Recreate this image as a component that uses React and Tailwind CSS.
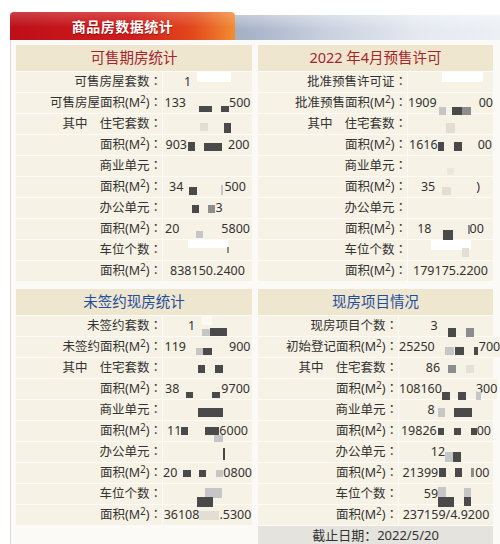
import React from 'react';

const D = '#4a4a4a';
const M = '#8d8d8d';
const L = '#c6c6c6';
const W = '#ffffff';
const F = '#e2ded3';

// a blurred stretch of a number: width + grey squares [x, y, w, h, colour]
const B = (w, blocks) => ({ w, blocks });

const PANELS = [
  {
    title: '可售期房统计',
    color: '#a2252b',
    cols: 'grid-cols-[146px_1fr]',
    labels: ['可售房屋套数', '可售房屋面积(M2)', '其中|住宅套数', '面积(M2)', '商业单元', '面积(M2)', '办公单元', '面积(M2)', '车位个数', '面积(M2)'],
    values: [
      ['1', B(40, [[6, 0, 34, 10, W]])],
      ['133', B(43, [[13, 13, 13, 6, D], [35, 13, 8, 6, D]]), '500'],
      [B(60, [[22, 9, 8, 8, F], [46, 9, 7, 10, D]])],
      ['903', B(41, [[1, 7, 7, 9, D], [17, 8, 18, 8, D]]), '200'],
      [],
      ['34', B(41, [[6, 10, 8, 8, D], [38, 8, 2, 10, L]]), '500'],
      [B(23, [[0, 7, 7, 8, D], [16, 7, 7, 8, M]]), '3'],
      ['20', B(42, [[17, 12, 7, 7, L]]), '5800'],
      [B(40, [[0, 0, 40, 8, W], [39, 7, 2, 6, M]])],
      ['838150.2400'],
    ],
  },
  {
    title: '2022 年4月预售许可',
    color: '#a2252b',
    cols: 'grid-cols-[149px_1fr]',
    labels: ['批准预售许可证', '批准预售面积(M2)', '其中|住宅套数', '面积(M2)', '商业单元', '面积(M2)', '办公单元', '面积(M2)', '车位个数', '面积(M2)'],
    values: [
      [B(41, [[12, 0, 41, 10, W]])],
      ['1909', B(42, [[2, 14, 7, 8, L], [15, 14, 10, 8, D], [25, 14, 9, 8, M]]), '00'],
      [B(20, [[5, 9, 9, 10, F]])],
      ['1616', B(40, [[0, 7, 6, 9, D], [16, 7, 8, 9, D]]), '00'],
      [B(20, [[6, 12, 7, 7, '#ebe7dc']])],
      ['35', B(41, [[7, 10, 9, 8, F]]), ')'],
      [],
      ['18', B(38, [[11, 11, 10, 10, D], [36, 6, 2, 9, M]]), '00'],
      [B(40, [[0, 0, 40, 10, W], [31, 8, 7, 9, F]])],
      ['179175.2200'],
    ],
  },
  {
    title: '未签约现房统计',
    color: '#1f4e9b',
    cols: 'grid-cols-[146px_1fr]',
    labels: ['未签约套数', '未签约面积(M2)', '其中|住宅套数', '面积(M2)', '商业单元', '面积(M2)', '办公单元', '面积(M2)', '车位个数', '面积(M2)'],
    values: [
      ['1', B(32, [[7, 0, 10, 9, '#fbfaf5'], [7, 13, 8, 7, L], [15, 12, 17, 8, D]])],
      ['119', B(43, [[10, 11, 7, 7, L], [17, 11, 9, 7, D]]), '900'],
      [B(40, [[10, 7, 7, 8, D], [27, 7, 8, 8, D]])],
      ['38', B(42, [[7, 13, 7, 6, D], [33, 13, 8, 6, D]]), '9700'],
      [B(40, [[10, 8, 25, 9, D]])],
      ['11', B(38, [[0, 6, 7, 8, D], [24, 6, 14, 8, D], [33, 14, 9, 7, L]]), '6000'],
      [B(34, [[32, 6, 2, 12, D]])],
      ['20', B(46, [[6, 7, 8, 7, D], [22, 7, 7, 7, D], [39, 7, 7, 7, L]]), '0800'],
      [B(30, [[12, 4, 17, 10, L], [4, 13, 16, 10, D]])],
      ['36108', B(20, [[0, 6, 20, 9, F]]), '.5300'],
    ],
  },
  {
    title: '现房项目情况',
    color: '#1f4e9b',
    cols: 'grid-cols-[140px_1fr]',
    labels: ['现房项目个数', '初始登记面积(M2)', '其中|住宅套数', '面积(M2)', '商业单元', '面积(M2)', '办公单元', '面积(M2)', '车位个数', '面积(M2)'],
    values: [
      ['3', B(24, [[10, 12, 8, 9, D], [28, 12, 8, 9, M]])],
      ['25250', B(44, [[10, 10, 9, 8, L], [20, 10, 9, 8, D], [39, 10, 4, 8, D]]), '700'],
      ['86', B(26, [[8, 7, 8, 8, M], [26, 7, 8, 8, '#e4e1d8']])],
      ['108160', B(34, [[0, 13, 8, 8, D], [16, 13, 8, 8, D], [34, 13, 5, 8, L]]), '300'],
      ['8', B(30, [[3, 8, 7, 9, L], [19, 8, 18, 9, D]])],
      ['19826', B(40, [[1, 7, 6, 7, D], [17, 7, 7, 7, D], [34, 7, 6, 7, D]]), '00'],
      ['12', B(16, [[0, 10, 8, 10, L], [8, 10, 8, 10, D]])],
      ['21399', B(37, [[1, 5, 7, 9, D], [17, 5, 7, 9, D], [33, 5, 3, 9, M]]), '00'],
      ['59', B(30, [[0, 3, 8, 10, L], [0, 13, 16, 10, D], [26, 4, 7, 9, L], [26, 13, 7, 9, D]])],
      ['237159/4.9200'],
    ],
    footer: '截止日期：2022/5/20',
  },
];

// full-width colon, centred the way the source font draws it
const Colon = () => <span className="font-['Noto_Sans_CJK_JP',sans-serif]">：</span>;

function Label({ text }) {
  if (text.includes('|')) {
    const [a, b] = text.split('|');
    return (
      <>
        <span>{a}</span>
        <span className="ml-3">{b}<Colon /></span>
      </>
    );
  }
  if (text.includes('(M2)')) {
    return (
      <span>
        {text.replace('(M2)', '')}(M<sup className="text-[10px] -top-[0.45em]">2</sup>)<Colon />
      </span>
    );
  }
  return <span>{text}<Colon /></span>;
}

function Blur({ w, blocks }) {
  return (
    <span className="relative self-stretch shrink-0" style={{ width: w }}>
      {blocks.map(([x, y, bw, bh, c], i) => (
        <span key={i} className="absolute" style={{ left: x, top: y, width: bw, height: bh, background: c }} />
      ))}
    </span>
  );
}

function Panel({ title, color, cols, labels, values, footer }) {
  return (
    <div className="flex flex-col gap-px bg-[#fcfbf7]">
      <div className="h-[26px] flex items-center justify-center bg-[#efe6d0] text-[14.5px]" style={{ color }}>
        {title}
      </div>
      {labels.map((l, i) => (
        <div key={i} className={`grid gap-px ${cols}`}>
          <div className="h-[20px] flex items-center justify-end bg-[#f6f2e5]">
            <Label text={l} />
          </div>
          <div className="h-[20px] flex items-center justify-center bg-[#f6f2e5]">
            {values[i].map((v, j) => (typeof v === 'string' ? <span key={j}>{v}</span> : <Blur key={j} {...v} />))}
          </div>
        </div>
      ))}
      {footer && (
        <div className="h-[20px] flex items-center justify-center bg-[#e4e3de] text-[13px]">{footer}</div>
      )}
    </div>
  );
}

export default function App() {
  return (
    <div className="w-[500px] h-[544px] overflow-hidden bg-white pl-[10px] pt-[12px] text-[12.5px] text-[#333] font-['Noto_Sans','Noto_Sans_CJK_SC',sans-serif]">
      {/* header tab */}
      <div className="flex items-end h-[28px]">
        <div className="w-[225px] h-[28px] rounded-t-[4px] flex items-center justify-center bg-[linear-gradient(180deg,rgba(255,255,255,0.2)_0%,rgba(255,255,255,0)_55%),linear-gradient(90deg,#bd0f19_0%,#d21d1c_55%,#e34a1c_82%,#f18d33_100%)]">
          <span className="text-white font-bold text-[14px] tracking-[0.5px] [text-shadow:0_1px_1px_rgba(90,0,0,0.5)]">商品房数据统计</span>
        </div>
        <div className="flex-1 h-[25px] bg-[linear-gradient(180deg,rgba(255,255,255,0.35)_0%,rgba(255,255,255,0)_60%),linear-gradient(90deg,#a3aec4_0%,#c9d1df_35%,#e5e9f1_70%,#eceff4_100%)]" />
      </div>

      {/* body */}
      <div className="h-full border-l border-[#dadada] bg-[#fbfaf6] pt-[5px] pl-[5px]">
        <div className="grid grid-cols-[236px_235px] gap-x-[6px] gap-y-[8px] items-start">
          {PANELS.map((p, i) => (
            <Panel key={i} {...p} />
          ))}
        </div>
      </div>
    </div>
  );
}
